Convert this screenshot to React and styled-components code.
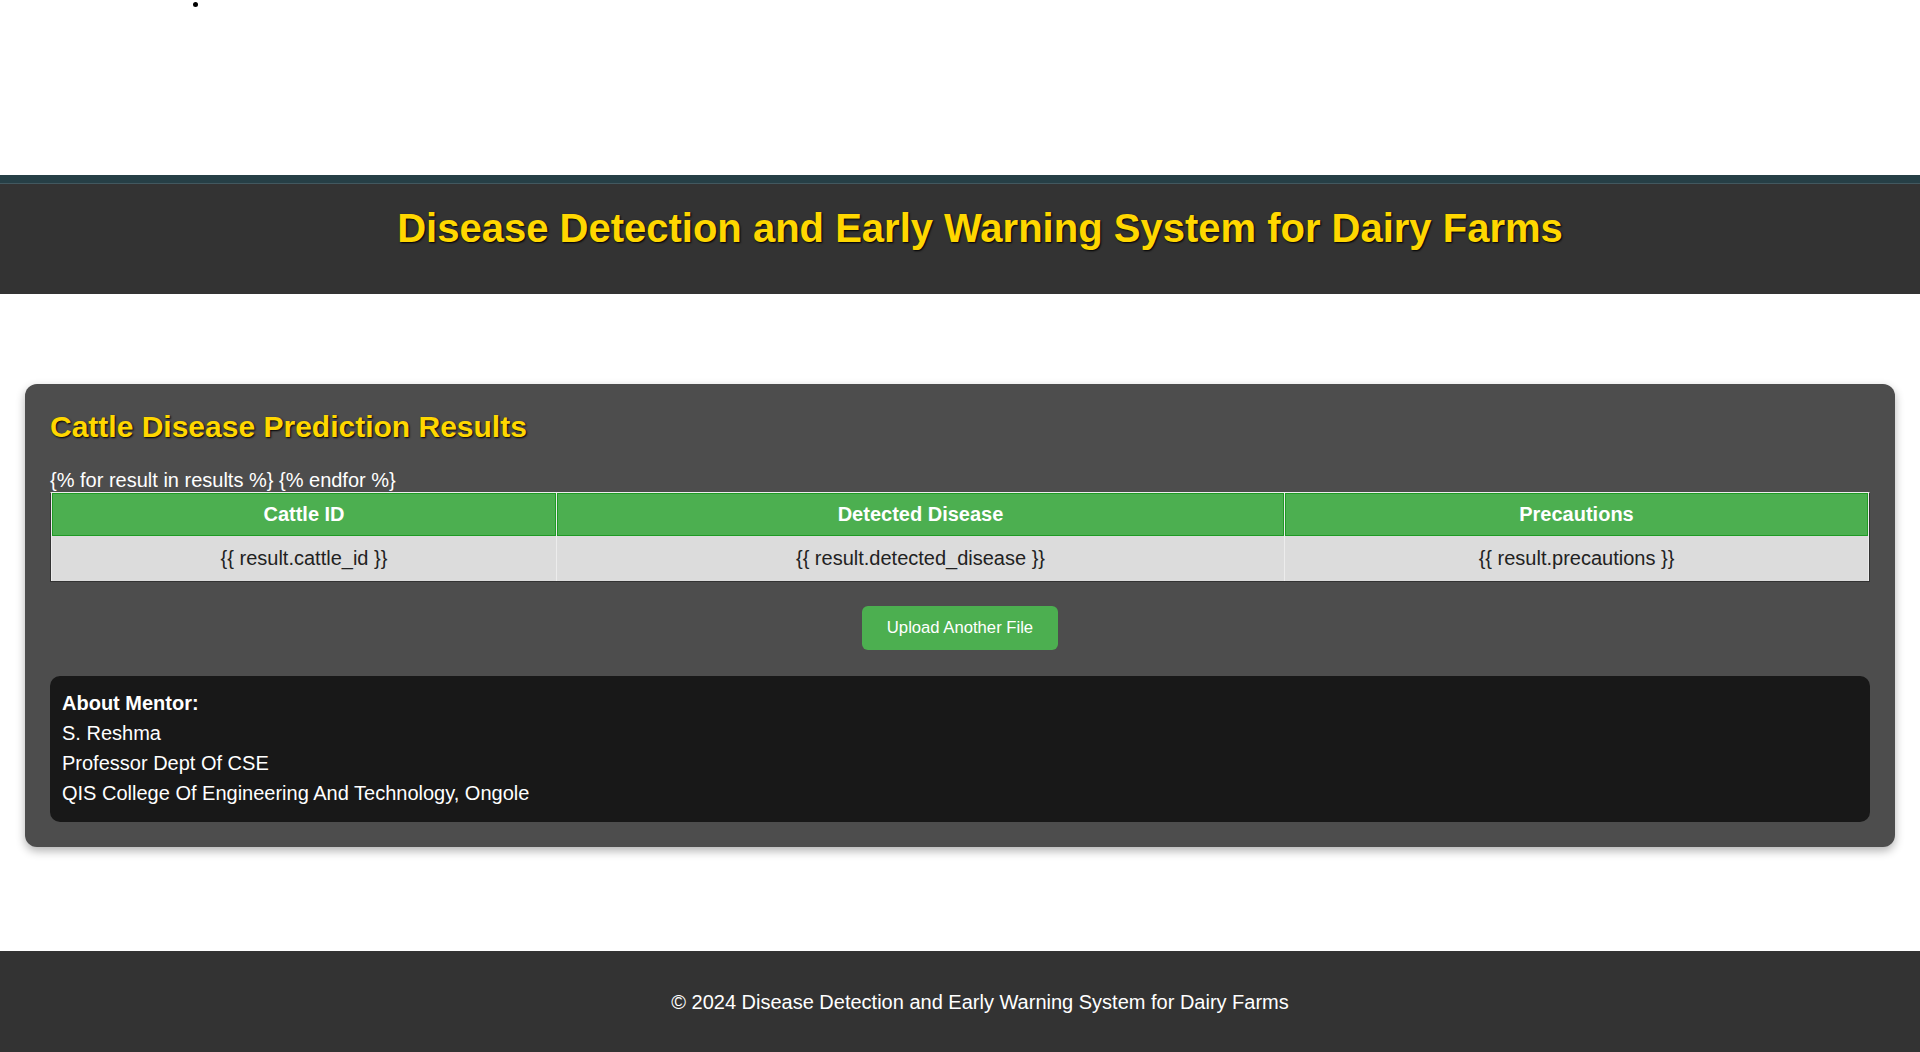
import React from 'react';
import styled, { createGlobalStyle } from 'styled-components';

const results = [
  {
    cattle_id: '{{ result.cattle_id }}',
    detected_disease: '{{ result.detected_disease }}',
    precautions: '{{ result.precautions }}'
  }
];

const columns = [
  { key: 'cattle_id', label: 'Cattle ID', width: 504 },
  { key: 'detected_disease', label: 'Detected Disease', width: 727 },
  { key: 'precautions', label: 'Precautions', width: 583 }
];

const mentorLines = [
  'S. Reshma',
  'Professor Dept Of CSE',
  'QIS College Of Engineering And Technology, Ongole'
];

const App = () => {
  return (
    <>
      <GlobalStyle />
      <TopArea>
        <NavDot />
      </TopArea>
      <NavStrip />

      <Header>
        <h1>Disease Detection and Early Warning System for Dairy Farms</h1>
      </Header>

      <Main>
        <ResultCard>
          <CardTitle>Cattle Disease Prediction Results</CardTitle>
          <TemplateNote>{'{% for result in results %} {% endfor %}'}</TemplateNote>

          <ResultTable>
            <colgroup>
              {columns.map(c => (
                <col key={c.key} style={{ width: c.width }} />
              ))}
            </colgroup>
            <thead>
              <tr>
                {columns.map(c => (
                  <HeadCell key={c.key}>{c.label}</HeadCell>
                ))}
              </tr>
            </thead>
            <tbody>
              {results.map((r, i) => (
                <tr key={i}>
                  {columns.map(c => (
                    <BodyCell key={c.key}>{r[c.key]}</BodyCell>
                  ))}
                </tr>
              ))}
            </tbody>
          </ResultTable>

          <ButtonRow>
            <UploadButton type="button">Upload Another File</UploadButton>
          </ButtonRow>

          <MentorBox>
            <strong>About Mentor:</strong>
            {mentorLines.map(line => (
              <div key={line}>{line}</div>
            ))}
          </MentorBox>
        </ResultCard>
      </Main>

      <Footer>
        <p>&copy; 2024 Disease Detection and Early Warning System for Dairy Farms</p>
      </Footer>
    </>
  );
};

const GlobalStyle = createGlobalStyle`
  html, body {
    margin: 0;
    padding: 0;
    background: #ffffff;
    overflow-x: hidden;
  }

  body {
    font-family: "Liberation Sans", Arial, sans-serif;
    font-size: 20px;
  }

  * {
    box-sizing: border-box;
  }
`;

const TopArea = styled.div`
  height: 175px;
  padding-top: 2px;
`;

const NavDot = styled.div`
  width: 5px;
  height: 5px;
  margin-left: 193px;
  border-radius: 50%;
  background: #000;
`;

const NavStrip = styled.div`
  height: 9px;
  background: #263f46;
  border-bottom: 1px solid #42585f;
`;

const Header = styled.header`
  background: #333333;
  padding: 21px 0 43px 40px;
  text-align: center;

  h1 {
    margin: 0;
    font-size: 40px;
    line-height: 46px;
    font-weight: bold;
    color: #ffd700;
    text-shadow: 1px 1px 2px #000;
  }
`;

const Main = styled.main`
  padding: 90px 25px 104px;
`;

const ResultCard = styled.section`
  background: #4d4d4d;
  border-radius: 12px;
  padding: 25px;
  box-shadow: 0 4px 10px rgba(0, 0, 0, 0.3);
  color: #ffffff;
`;

const CardTitle = styled.h2`
  margin: 0 0 25px;
  font-size: 30px;
  line-height: 35px;
  font-weight: bold;
  color: #ffd700;
  text-shadow: 1px 1px 2px #000;
`;

const TemplateNote = styled.div`
  font-size: 20px;
  line-height: 23px;
  color: #ffffff;
`;

const ResultTable = styled.table`
  width: 100%;
  table-layout: fixed;
  border-collapse: separate;
  border-spacing: 1px 0;
  background: #ececec;
  border: 1px solid #333;
  border-top-color: #eeeeee;
`;

const HeadCell = styled.th`
  background: #4caf50;
  border: 1px solid #1f9a25;
  color: #ffffff;
  font-size: 20px;
  line-height: 23px;
  font-weight: bold;
  padding: 9px 8px;
  text-align: center;
`;

const BodyCell = styled.td`
  background: #dcdcdc;
  color: #222222;
  font-size: 20px;
  line-height: 23px;
  padding: 11px 8px;
  text-align: center;
`;

const ButtonRow = styled.div`
  display: flex;
  justify-content: center;
  margin: 24px 0 26px;
`;

const UploadButton = styled.button`
  background: #4caf50;
  color: #ffffff;
  border: none;
  border-radius: 6px;
  padding: 12px 25px;
  font-family: "Liberation Sans", Arial, sans-serif;
  font-size: 16.67px;
  line-height: 20px;
  cursor: pointer;
`;

const MentorBox = styled.div`
  background: #181818;
  border-radius: 10px;
  padding: 12px 12px 14px;
  font-size: 20px;
  line-height: 30px;
  color: #ffffff;

  strong {
    display: block;
    font-weight: bold;
  }
`;

const Footer = styled.footer`
  background: #333333;
  color: #ffffff;
  text-align: center;
  padding: 40px 0 40px 40px;

  p {
    margin: 0;
    font-size: 20px;
    line-height: 23px;
  }
`;

export default App;
